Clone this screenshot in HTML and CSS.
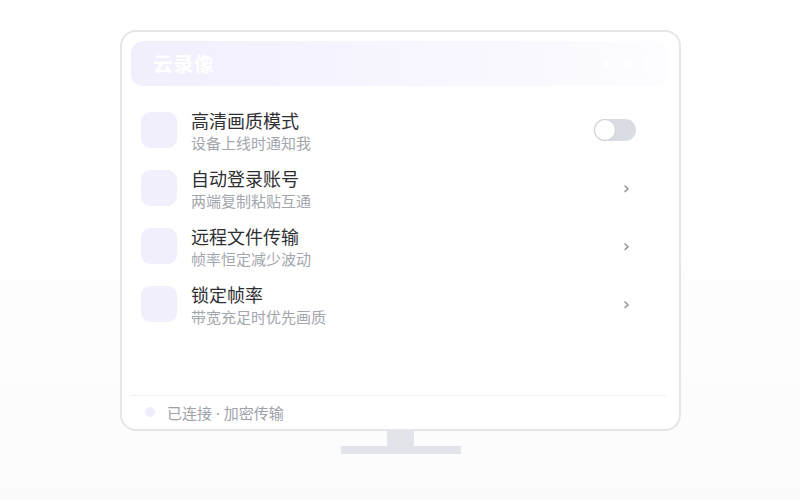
FILE: index.html
```html
<!DOCTYPE html>
<html lang="zh">
<head>
<meta charset="utf-8">
<link rel="stylesheet" href="styles.css">
</head>
<body>
<div class="stage">
  <div class="monitor">
    <div class="screen">
      <div class="header">
        <span class="header-title">云录像</span>
        <div class="dots"><span></span><span></span><span></span></div>
      </div>
      <div class="list">
        <div class="row">
          <div class="icon"></div>
          <div class="texts">
            <div class="title">高清画质模式</div>
            <div class="sub">设备上线时通知我</div>
          </div>
          <div class="toggle"><span class="knob"></span></div>
        </div>
        <div class="row">
          <div class="icon"></div>
          <div class="texts">
            <div class="title">自动登录账号</div>
            <div class="sub">两端复制粘贴互通</div>
          </div>
          <div class="chev">›</div>
        </div>
        <div class="row">
          <div class="icon"></div>
          <div class="texts">
            <div class="title">远程文件传输</div>
            <div class="sub">帧率恒定减少波动</div>
          </div>
          <div class="chev">›</div>
        </div>
        <div class="row">
          <div class="icon"></div>
          <div class="texts">
            <div class="title">锁定帧率</div>
            <div class="sub">带宽充足时优先画质</div>
          </div>
          <div class="chev">›</div>
        </div>
      </div>
      <div class="footer">
        <span class="fdot"></span>
        <span class="ftext">已连接<span class="sep"> · </span>加密传输</span>
      </div>
    </div>
    <div class="neck"></div>
    <div class="base"></div>
  </div>
</div>
</body>
</html>
```
FILE: styles.css
```css
* { box-sizing: border-box; }
html, body {
  margin: 0;
  padding: 0;
  width: 800px;
  height: 500px;
  overflow: hidden;
}
body {
  font-family: "Noto Sans CJK SC", "Noto Sans", sans-serif;
  background: linear-gradient(180deg, #ffffff 0%, #ffffff 40%, #fbfbfc 100%);
}
.stage {
  padding-top: 30px;
  display: flex;
  justify-content: center;
}
.monitor {
  display: flex;
  flex-direction: column;
  align-items: center;
  margin-left: 1px;
}
.screen {
  width: 561px;
  height: 401px;
  border: 2px solid #e4e6ea;
  border-radius: 16px;
  background: #fff;
  padding: 9px 11px 0 9px;
  display: flex;
  flex-direction: column;
}
.header {
  height: 45px;
  border-radius: 12px;
  background: linear-gradient(90deg, #f2effd 0%, #f7f5fe 50%, #fdfcff 100%);
  display: flex;
  align-items: center;
  justify-content: space-between;
  padding: 0 17px 0 22px;
}
.header-title {
  color: #fff;
  font-size: 20px;
  font-weight: 700;
  letter-spacing: 0.5px;
}
.dots {
  display: flex;
  gap: 15px;
}
.dots span {
  width: 6px;
  height: 6px;
  border-radius: 50%;
  background: #fff;
}
.list {
  flex: 1;
  padding: 26px 32px 0 10px;
  display: flex;
  flex-direction: column;
  gap: 22px;
}
.row {
  display: flex;
  align-items: center;
  height: 36px;
}
.icon {
  width: 36px;
  height: 36px;
  border-radius: 9px;
  background: #f2effd;
  flex: none;
}
.texts {
  flex: 1;
  margin-left: 14px;
  margin-top: 1px;
  display: flex;
  flex-direction: column;
}
.title {
  font-size: 18px;
  line-height: 24px;
  color: #2f2f33;
}
.sub {
  font-size: 15px;
  line-height: 22px;
  color: #a3a6ad;
}
.toggle {
  width: 42px;
  height: 22px;
  border-radius: 11px;
  background: #d9dce2;
  position: relative;
  flex: none;
}
.knob {
  position: absolute;
  left: 1px;
  top: 1px;
  width: 20px;
  height: 20px;
  border-radius: 50%;
  background: #fff;
  box-shadow: 0 0 0 1px #d0d3da;
}
.chev {
  width: 42px;
  text-align: right;
  padding-right: 6px;
  color: #8b8f99;
  font-size: 18px;
  line-height: 22px;
  font-family: "DejaVu Sans", sans-serif;
  flex: none;
}
.footer {
  height: 34px;
  border-top: 1px solid #eceef1;
  margin-right: 2px;
  display: flex;
  align-items: center;
  padding-left: 14px;
  padding-bottom: 1px;
}
.fdot {
  width: 10px;
  height: 10px;
  border-radius: 50%;
  background: #efecfc;
}
.ftext {
  margin-left: 12px;
  font-size: 15px;
  color: #9da1a8;
}
.sep {
  font-family: "Noto Sans", sans-serif;
}
.neck {
  width: 27px;
  height: 15px;
  background: #e1e4e8;
}
.base {
  width: 120px;
  height: 8px;
  background: #e1e4e8;
}
```
